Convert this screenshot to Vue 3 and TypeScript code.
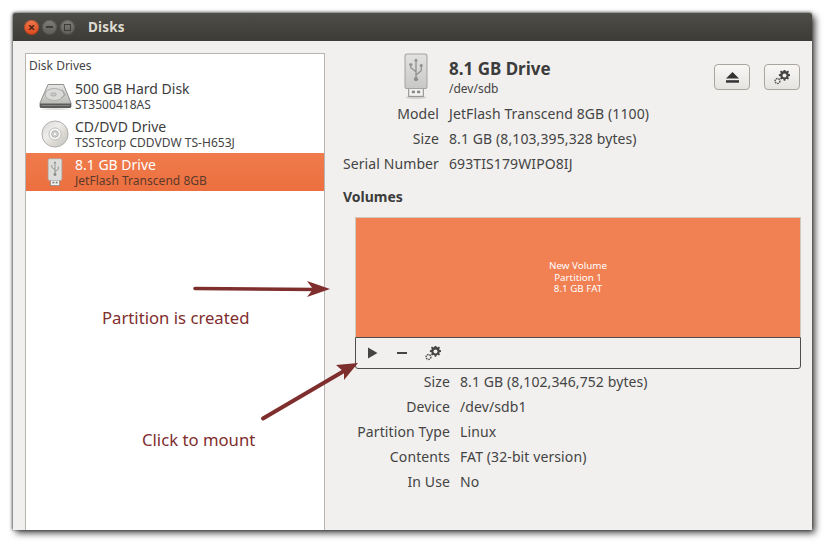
<script setup lang="ts">
interface Drive { title: string; sub: string; kind: 'hdd' | 'cd' | 'usb'; selected?: boolean }
const drives: Drive[] = [
  { title: '500 GB Hard Disk', sub: 'ST3500418AS', kind: 'hdd' },
  { title: 'CD/DVD Drive', sub: 'TSSTcorp CDDVDW TS-H653J', kind: 'cd' },
  { title: '8.1 GB Drive', sub: 'JetFlash Transcend 8GB', kind: 'usb', selected: true },
]
const driveInfo = [
  ['Model', 'JetFlash Transcend 8GB (1100)'],
  ['Size', '8.1 GB (8,103,395,328 bytes)'],
  ['Serial Number', '693TIS179WIPO8IJ'],
]
const volumeInfo = [
  ['Size', '8.1 GB (8,102,346,752 bytes)'],
  ['Device', '/dev/sdb1'],
  ['Partition Type', 'Linux'],
  ['Contents', 'FAT (32-bit version)'],
  ['In Use', 'No'],
]
const gearPath = 'M10.2 1h1.6l.3 1.5 1 .4 1.3-.8 1.1 1.1-.8 1.3.4 1 1.5.3v1.6l-1.5.3-.4 1 .8 1.3-1.1 1.1-1.3-.8-1 .4-.3 1.5h-1.6l-.3-1.5-1-.4-1.3.8-1.1-1.1.8-1.3-.4-1-1.5-.3V5.8l1.5-.3.4-1-.8-1.3 1.1-1.1 1.3.8 1-.4z'
</script>

<template>
  <div class="page">
    <div class="window">
      <header class="titlebar">
        <div class="controls">
          <span class="ctl close">×</span>
          <span class="ctl"><i class="minus"></i></span>
          <span class="ctl"><i class="square"></i></span>
        </div>
        <span class="wintitle">Disks</span>
      </header>
      <div class="body">
        <aside class="sidebar">
          <div class="sidehead">Disk Drives</div>
          <div v-for="d in drives" :key="d.title" class="drive" :class="{ selected: d.selected }">
            <span class="driveicon">
              <svg v-if="d.kind === 'hdd'" width="33" height="27" viewBox="0 0 33 27">
                <defs>
                  <linearGradient id="hddg" x1="0" y1="0" x2="0" y2="1">
                    <stop offset="0" stop-color="#e6e6e4" /><stop offset="1" stop-color="#b4b4b1" />
                  </linearGradient>
                </defs>
                <path d="M9 1.500h15.500L32 20v4H1v-4z" fill="url(#hddg)" stroke="#8f8f8d" />
                <ellipse cx="15.500" cy="11.500" rx="9.500" ry="6" fill="#dadad8" stroke="#a3a3a1" stroke-width=".8" />
                <ellipse cx="14.500" cy="11.500" rx="2.800" ry="1.600" fill="#cacac8" stroke="#949492" stroke-width=".6" />
                <path d="M23 6.500l3.500 5.500-4.500 3" fill="none" stroke="#a5a5a3" />
                <path d="M1 20.500h31V24a1 1 0 0 1-1 1H2a1 1 0 0 1-1-1z" fill="#5c5c5a" />
                <path d="M2.500 22.500h28" stroke="#8d8d8b" stroke-width=".8" />
                <ellipse cx="16.500" cy="26" rx="14" ry=".8" fill="#d5d5d3" />
              </svg>
              <svg v-else-if="d.kind === 'cd'" width="28" height="28" viewBox="0 0 30 30">
                <defs>
                  <linearGradient id="cdg" x1="0" y1="0" x2="1" y2="1">
                    <stop offset="0" stop-color="#d6d6d4" /><stop offset=".4" stop-color="#eeedeb" />
                    <stop offset=".6" stop-color="#dfdcd4" /><stop offset="1" stop-color="#c2c2c0" />
                  </linearGradient>
                </defs>
                <circle cx="15" cy="15" r="14" fill="url(#cdg)" stroke="#ababa9" />
                <circle cx="15" cy="15" r="6.500" fill="#f6f6f5" stroke="#bababa" />
                <circle cx="15" cy="15" r="3.500" fill="#e0e0de" stroke="#a5a5a3" />
                <circle cx="15" cy="15" r="1.700" fill="#fff" stroke="#b0b0ae" stroke-width=".6" />
              </svg>
              <svg v-else width="16" height="29" viewBox="0 0 24 44">
                <rect x="5" y="33" width="14" height="9" fill="#f2f2f0" stroke="#777" />
                <rect x="8" y="36" width="3" height="2.500" fill="#777" />
                <rect x="13" y="36" width="3" height="2.500" fill="#777" />
                <rect x="1.500" y="1" width="21" height="33" rx="2" fill="#dcdcda" stroke="#a3a3a1" />
                <path d="M12 7v17M12 18l-5-4v-3M12 21l5-4v-4" fill="none" stroke="#8a8a88" stroke-width="1.300" />
                <circle cx="12" cy="25" r="2.200" fill="#8a8a88" />
                <path d="M12 5l2 3h-4z" fill="#8a8a88" />
              </svg>
            </span>
            <span class="drivetext">
              <span class="drivetitle">{{ d.title }}</span>
              <span class="drivesub">{{ d.sub }}</span>
            </span>
          </div>
        </aside>
        <main class="detail">
          <div class="drivehead">
            <svg class="bigusb" width="26" height="46" viewBox="0 0 24 44">
              <defs>
                <linearGradient id="usbg" x1="0" y1="0" x2="0" y2="1">
                  <stop offset="0" stop-color="#e2e2e0" /><stop offset="1" stop-color="#c8c8c6" />
                </linearGradient>
              </defs>
              <ellipse cx="12" cy="42.500" rx="10" ry="1.500" fill="#d0cfcc" />
              <rect x="5" y="33" width="14" height="8.500" fill="#f2f2f0" stroke="#8f8f8d" />
              <rect x="8" y="36" width="3" height="2.500" fill="#8a8a88" />
              <rect x="13" y="36" width="3" height="2.500" fill="#8a8a88" />
              <rect x="1.500" y="1" width="21" height="33" rx="2" fill="url(#usbg)" stroke="#a3a3a1" />
              <path d="M12 7v17M12 18l-5-4v-3M12 21l5-4v-4" fill="none" stroke="#8f8f8d" stroke-width="1.200" />
              <circle cx="12" cy="25" r="2" fill="#8f8f8d" />
              <path d="M12 5l2 3h-4z" fill="#8f8f8d" />
              <rect x="5.500" y="10" width="3" height="2" fill="#8f8f8d" />
              <circle cx="17" cy="12" r="1.500" fill="#8f8f8d" />
            </svg>
            <div class="headtext">
              <div class="headtitle">8.1 GB Drive</div>
              <div class="headsub">/dev/sdb</div>
            </div>
            <div class="headbuttons">
              <button class="tool">
                <svg width="13" height="11" viewBox="0 0 13 11"><path d="M6.500 0l6.500 6.500H0z" fill="#333" /><rect y="8.200" width="13" height="2.500" fill="#333" /></svg>
              </button>
              <button class="tool">
                <svg width="16" height="15" viewBox="0 0 16 15">
                  <path :d="gearPath" fill="#444" transform="translate(-0.500 -1.500)" />
                  <circle cx="10.500" cy="5.500" r="2" fill="#f0efed" />
                  <circle cx="3.500" cy="11" r="2.400" fill="#f4f3f1" stroke="#555" stroke-width="1.500" stroke-dasharray="1.500 .7" />
                </svg>
              </button>
            </div>
          </div>
          <dl class="info driveinfo">
            <template v-for="r in driveInfo" :key="r[0]">
              <dt>{{ r[0] }}</dt><dd>{{ r[1] }}</dd>
            </template>
          </dl>
          <h3 class="volhead">Volumes</h3>
          <section class="volume">
            <div class="partition">
              <span>New Volume</span><span>Partition 1</span><span>8.1 GB FAT</span>
            </div>
            <div class="voltools">
              <svg width="12" height="12" viewBox="0 0 12 12"><path d="M1 .5L10.500 6 1 11.500z" fill="#444" /></svg>
              <svg width="12" height="12" viewBox="0 0 12 12"><rect x="1" y="5" width="10" height="2" fill="#444" /></svg>
              <svg width="16" height="15" viewBox="0 0 16 15">
                <path :d="gearPath" fill="#444" transform="translate(-0.500 -1.500)" />
                <circle cx="10.500" cy="5.500" r="2" fill="#f1f0ee" />
                <circle cx="3.500" cy="11" r="2.400" fill="#f1f0ee" stroke="#555" stroke-width="1.500" stroke-dasharray="1.500 .7" />
              </svg>
            </div>
          </section>
          <dl class="info volinfo">
            <template v-for="r in volumeInfo" :key="r[0]">
              <dt>{{ r[0] }}</dt><dd>{{ r[1] }}</dd>
            </template>
          </dl>
        </main>
      </div>
    </div>

    <svg class="arrows" width="828" height="546" viewBox="0 0 828 546">
      <path d="M195 288.500L316 289.500" stroke="#7f2e2e" stroke-width="3.500" stroke-linecap="round" />
      <path d="M307 281l23 8-23 8 6-8z" fill="#7f2e2e" />
      <path d="M263 418.500L344 371" stroke="#7f2e2e" stroke-width="4" stroke-linecap="round" />
      <path d="M336 365l22-2-14 17v-8z" fill="#7f2e2e" />
    </svg>
    <span class="note note1">Partition is created</span>
    <span class="note note2">Click to mount</span>
  </div>
</template>

<style>
html, body { margin: 0; background: #fff; }
</style>

<style scoped>
.page {
  position: relative;
  width: 828px;
  height: 546px;
  padding: 13px 16px 16px 13px;
  box-sizing: border-box;
  background: #fff;
  overflow: hidden;
  font-family: "Noto Sans", sans-serif;
  color: #3c3c3c;
}
.window {
  height: 517px;
  display: flex;
  flex-direction: column;
  background: #f1f0ee;
  box-shadow: 3px 3px 7px rgba(0, 0, 0, .75), 0 -1px 3px rgba(0, 0, 0, .3), -1px 0 3px rgba(0, 0, 0, .4);
  border-radius: 2px 2px 0 0;
}
.titlebar {
  height: 28px;
  flex: none;
  display: flex;
  align-items: center;
  padding-left: 11px;
  background: linear-gradient(#4f4d47, #3c3b36);
  border-radius: 2px 2px 0 0;
}
.controls { display: flex; gap: 3px; width: 64px; }
.ctl {
  width: 15px;
  height: 15px;
  border-radius: 50%;
  display: flex;
  align-items: center;
  justify-content: center;
  background: linear-gradient(#7f7d77, #5f5d58);
  box-shadow: inset 0 0 0 1px rgba(0, 0, 0, .2);
}
.ctl.close {
  background: linear-gradient(#f4774a, #d9481f);
  color: #4a2216;
  font-size: 13px;
  line-height: 15px;
  font-weight: 700;
}
.minus { width: 7px; height: 2px; background: #3c3b37; }
.square { width: 5px; height: 5px; border: 1.500px solid #3c3b37; }
.wintitle { color: #dfdbd2; font-weight: 700; font-size: 13.500px; letter-spacing: .2px; }
.body { flex: 1; display: flex; min-height: 0; padding: 12px 0 0 12px; }
.sidebar {
  width: 298px;
  flex: none;
  background: #fff;
  border: 1px solid #b8b5ae;
  border-bottom: 0;
}
.sidehead { height: 23px; padding-left: 3px; font-size: 12px; line-height: 23px; color: #444; }
.drive { height: 38px; display: flex; align-items: center; }
.drive.selected { background: linear-gradient(#f07b4c, #ec6f3f); }
.driveicon { width: 49px; display: flex; justify-content: center; box-sizing: border-box; padding-left: 11px; padding-right: 2px; }
.drivetext { display: flex; flex-direction: column; }
.drivetitle { font-size: 14px; line-height: 17px; }
.drivesub { font-size: 12px; line-height: 15px; color: #444; letter-spacing: .03px; }
.selected .drivetitle { color: #fff; }
.selected .drivesub { color: #5c3a2a; }
.detail { flex: 1; display: flex; flex-direction: column; min-width: 0; position: relative; }
.drivehead { height: 47px; display: flex; align-items: flex-start; flex: none; padding-left: 78px; }
.bigusb { flex: none; margin-top: 0; }
.headtext { margin-left: 20px; padding-top: 4px; }
.headtitle { font-size: 17px; font-weight: 700; line-height: 24px; color: #3c3c3c; }
.headsub { font-size: 12px; line-height: 15px; color: #444; }
.headbuttons { margin-left: auto; margin-right: 12px; margin-top: 11px; display: flex; gap: 14px; }
.tool {
  width: 36px;
  height: 26px;
  padding: 0;
  display: flex;
  align-items: center;
  justify-content: center;
  background: linear-gradient(#f8f7f6, #e6e4e1);
  border: 1px solid #aaa69f;
  border-radius: 4px;
}
.info {
  margin: 0;
  display: grid;
  grid-auto-rows: 25px;
  column-gap: 10px;
  align-items: center;
  font-size: 14px;
  letter-spacing: .1px;
}
.info dt { text-align: right; color: #444; }
.info dd { margin: 0; color: #444; }
.driveinfo { grid-template-columns: 114px 1fr; margin-top: 1px; }
.volinfo { grid-template-columns: 125px 1fr; margin-top: 0; }
.volhead { margin: 11px 0 0 18px; font-size: 14px; font-weight: 700; line-height: 20px; color: #3c3c3c; }
.volume {
  width: 446px;
  height: 152px;
  margin: 10px 0 0 30px;
  flex: none;
  display: flex;
  flex-direction: column;
}
.partition {
  height: 120px;
  flex: none;
  display: flex;
  flex-direction: column;
  align-items: center;
  justify-content: center;
  background: #f18053;
  border: 1px solid #cfc9c0;
  border-bottom: 0;
  box-sizing: border-box;
  color: #fff;
  font-size: 9.800px;
  line-height: 11.500px;
}
.voltools {
  flex: 1;
  display: flex;
  align-items: center;
  gap: 17px;
  padding-left: 11px;
  background: #f1f0ee;
  border: 1px solid #4e4d49;
  border-radius: 0 0 3px 3px;
}
.arrows { position: absolute; left: 0; top: 0; pointer-events: none; }
.note { position: absolute; color: #7f2e2e; font-size: 16.700px; line-height: 20px; white-space: nowrap; }
.note1 { left: 102px; top: 308px; }
.note2 { left: 142px; top: 430px; }
</style>
